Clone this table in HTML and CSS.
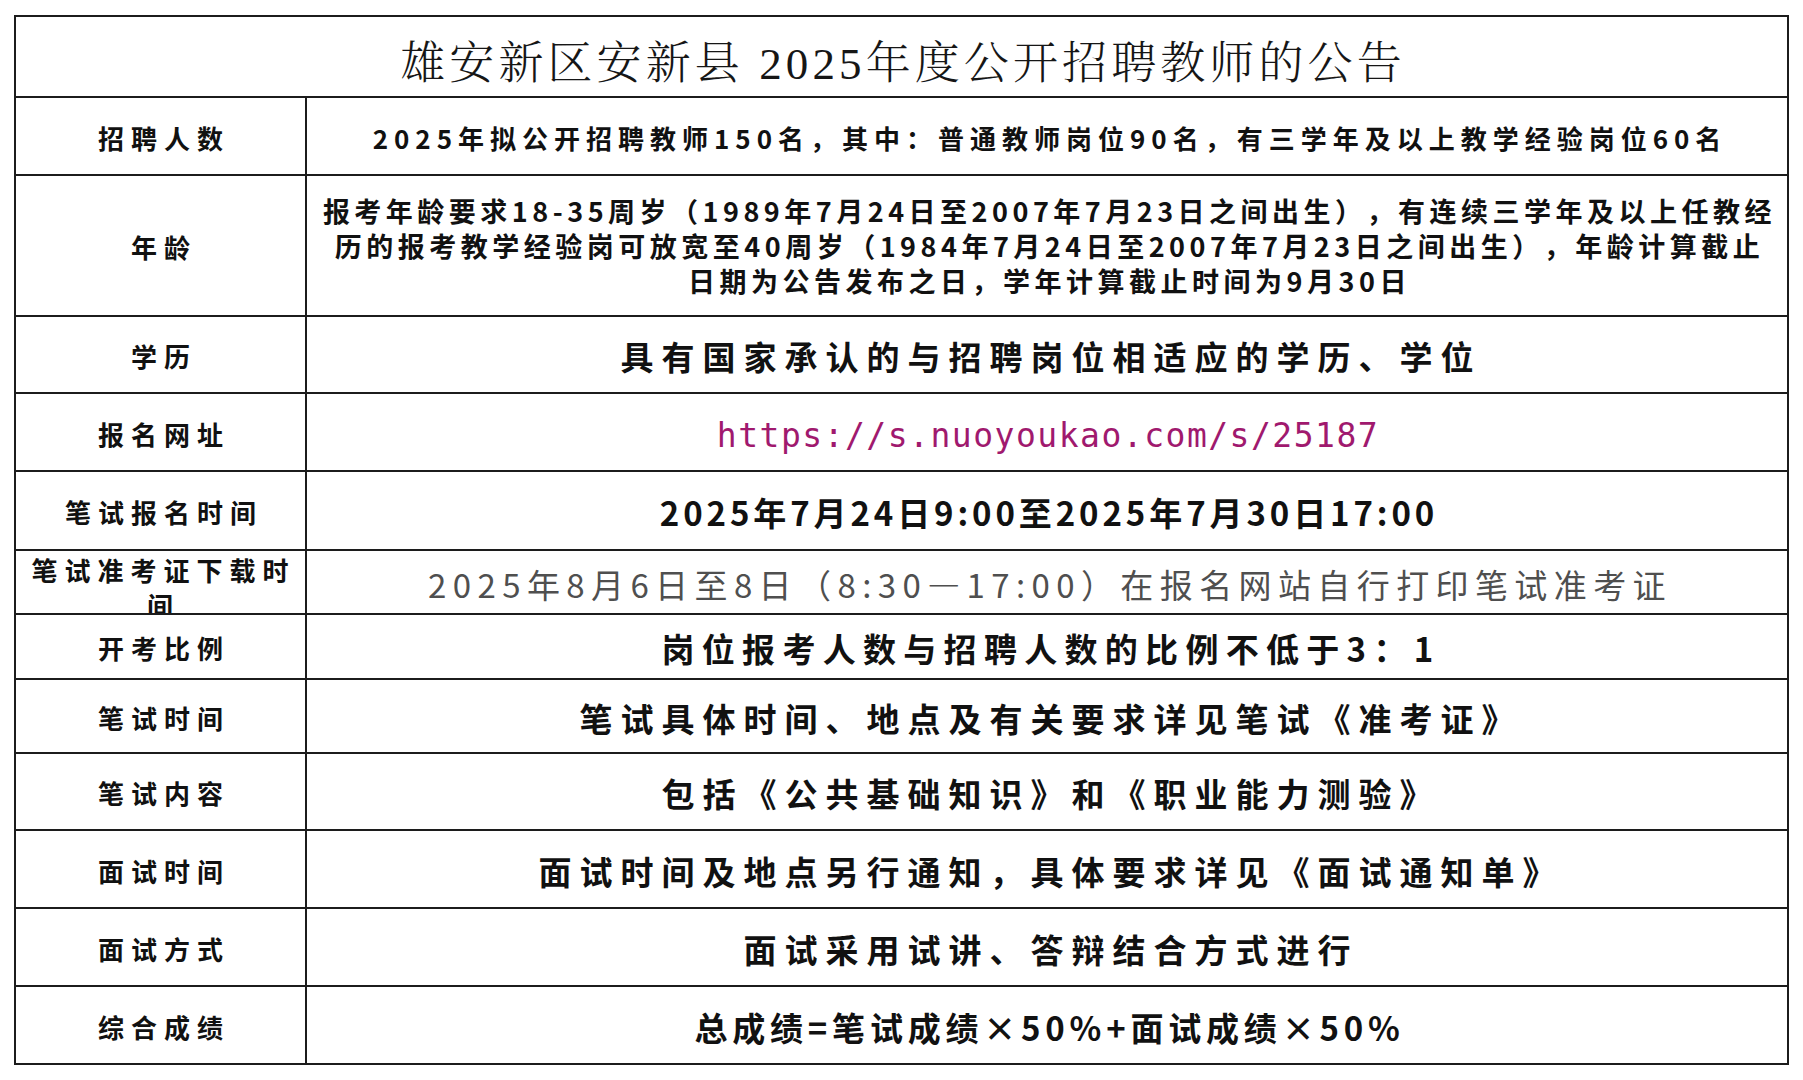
FILE: index.html
```html
<!DOCTYPE html>
<html lang="zh-CN">
<head>
<meta charset="utf-8">
<title>雄安新区安新县 2025年度公开招聘教师的公告</title>
<link rel="stylesheet" href="styles.css">
</head>
<body>
<div class="sheet">
  <div class="cell title">雄安新区安新县 2025年度公开招聘教师的公告</div>

  <div class="cell label">招聘人数</div>
  <div class="cell value v-count">2025年拟公开招聘教师150名，其中：普通教师岗位90名，有三学年及以上教学经验岗位60名</div>

  <div class="cell label">年龄</div>
  <div class="cell value v-age">报考年龄要求18-35周岁（1989年7月24日至2007年7月23日之间出生），有连续三学年及以上任教经<br>历的报考教学经验岗可放宽至40周岁（1984年7月24日至2007年7月23日之间出生），年龄计算截止<br>日期为公告发布之日，学年计算截止时间为9月30日</div>

  <div class="cell label">学历</div>
  <div class="cell value v-main">具有国家承认的与招聘岗位相适应的学历、学位</div>

  <div class="cell label">报名网址</div>
  <div class="cell value v-url">https://s.nuoyoukao.com/s/25187</div>

  <div class="cell label">笔试报名时间</div>
  <div class="cell value v-main v-dates">2025年7月24日9:00至2025年7月30日17:00</div>

  <div class="cell label label-wrap">笔试准考证下载时间</div>
  <div class="cell value v-gray">2025年8月6日至8日（8:30—17:00）在报名网站自行打印笔试准考证</div>

  <div class="cell label">开考比例</div>
  <div class="cell value v-main v-ratio">岗位报考人数与招聘人数的比例不低于3：1</div>

  <div class="cell label">笔试时间</div>
  <div class="cell value v-main">笔试具体时间、地点及有关要求详见笔试《准考证》</div>

  <div class="cell label">笔试内容</div>
  <div class="cell value v-main">包括《公共基础知识》和《职业能力测验》</div>

  <div class="cell label">面试时间</div>
  <div class="cell value v-main">面试时间及地点另行通知，具体要求详见《面试通知单》</div>

  <div class="cell label">面试方式</div>
  <div class="cell value v-main">面试采用试讲、答辩结合方式进行</div>

  <div class="cell label">综合成绩</div>
  <div class="cell value v-main v-score">总成绩=笔试成绩×50%+面试成绩×50%</div>
</div>
</body>
</html>
```

FILE: styles.css
```css
html, body {
  margin: 0;
  padding: 0;
  background: #ffffff;
}

body {
  padding: 15px 0 0 14px;
  font-family: "Noto Sans CJK SC", "Noto Sans", sans-serif;
  color: #111111;
  text-spacing-trim: space-all;
}

.sheet {
  display: grid;
  grid-template-columns: 291px 1482px;
  grid-template-rows: 81px 78px 141px 77px 78px 79px 64px 65px 74px 77px 78px 78px 78px;
  border-top: 2px solid #1c1c1c;
  border-left: 2px solid #1c1c1c;
  width: max-content;
}

.cell {
  box-sizing: border-box;
  border-right: 2px solid #1c1c1c;
  border-bottom: 2px solid #1c1c1c;
  display: flex;
  align-items: center;
  justify-content: center;
  text-align: center;
  overflow: hidden;
  white-space: nowrap;
  padding-top: 3px;
}

.title {
  grid-column: 1 / span 2;
  font-family: "Liberation Serif", "Noto Serif CJK SC", "Noto Sans CJK SC", serif;
  font-weight: 300;
  font-size: 45px;
  letter-spacing: 4.1px;
  padding: 6px 0 0 3px;
  color: #161616;
}

.label {
  font-weight: 700;
  font-size: 26px;
  letter-spacing: 7px;
  padding-left: 7px;
  line-height: 34px;
}

.label-wrap {
  white-space: normal;
  line-height: 35px;
  padding: 10px 2px 0 8px;
}

.value {
  font-weight: 700;
}

.v-count {
  font-size: 26px;
  letter-spacing: 6px;
  padding-left: 6px;
}

.v-age {
  font-size: 27px;
  letter-spacing: 4.5px;
  line-height: 35px;
  padding: 0 0 0 5px;
}

.v-main {
  font-size: 33px;
  letter-spacing: 8px;
  padding-left: 8px;
}

.v-dates {
  letter-spacing: 3.9px;
  padding-left: 4px;
}

.v-ratio {
  letter-spacing: 7.3px;
}

.v-score {
  letter-spacing: 4.8px;
  padding-left: 5px;
}

.v-url {
  font-family: "DejaVu Sans Mono", "Liberation Mono", monospace;
  font-weight: 400;
  font-size: 33px;
  letter-spacing: 1.5px;
  color: #a0196e;
  padding: 6px 0 0 2px;
}

.v-gray {
  font-weight: 400;
  font-size: 33px;
  letter-spacing: 6.4px;
  padding-left: 6px;
  color: #4f4f4f;
}
```
